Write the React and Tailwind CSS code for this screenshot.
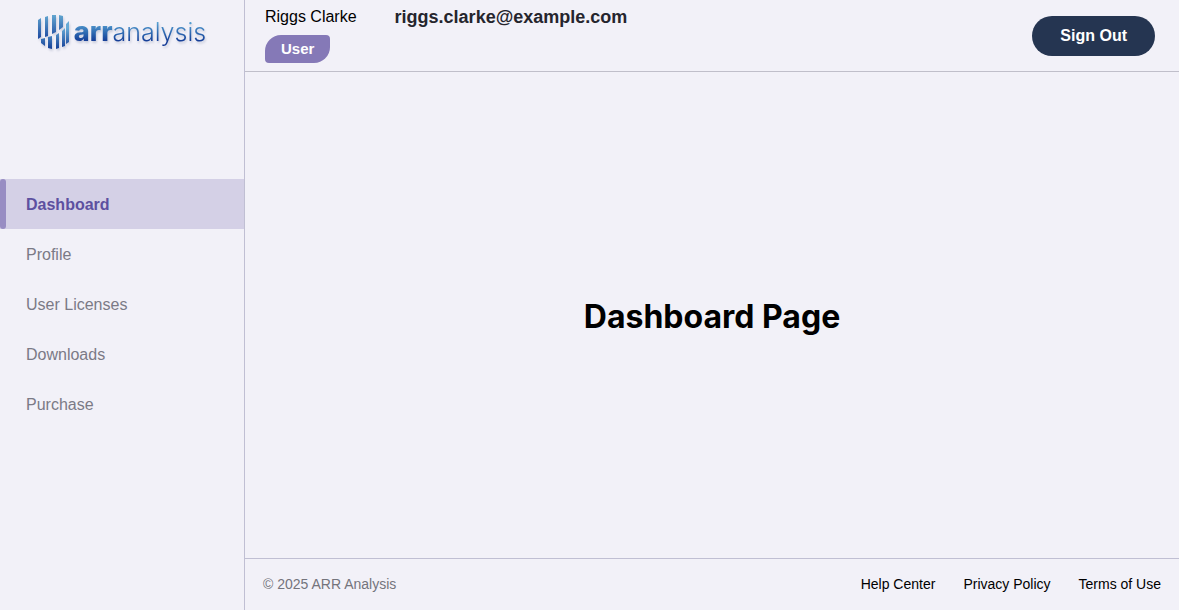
const navItems = ["Profile", "User Licenses", "Downloads", "Purchase"];
const footerLinks = ["Help Center", "Privacy Policy", "Terms of Use"];

function Logo() {
  return (
    <a href="#" aria-label="arranalysis" className="flex items-start gap-1 drop-shadow-[1px_2px_1px_rgba(40,60,110,0.2)]">
      <svg className="h-9 w-8" viewBox="0 0 32 36" aria-hidden="true">
        <defs>
          <linearGradient id="upper" gradientUnits="userSpaceOnUse" x1="0" y1="1" x2="0" y2="25">
            <stop offset="0" stopColor="#62a6d0" />
            <stop offset="1" stopColor="#1c479f" />
          </linearGradient>
          <linearGradient id="lower" gradientUnits="userSpaceOnUse" x1="0" y1="14" x2="0" y2="35">
            <stop offset="0" stopColor="#66aad6" />
            <stop offset="1" stopColor="#123d96" />
          </linearGradient>
        </defs>
        <path fill="url(#upper)" d="M0 6l3-2v19l-3 2zM7 3l3-1v20l-3 1zM14 1h4v17l-4 2zM21 1l4 1v11l-4 3z" />
        <path fill="url(#lower)" d="M3 25l4-1v8l-4-3zM10 23l4-1v13l-4-1zM18 21l3-2v15l-3 1zM24 17l3-3v18l-3 1zM28 10l3-3v21l-3 2z" />
      </svg>
      <span className="bg-linear-to-b from-[#5ba5d4] from-20% to-[#143b96] to-70% bg-clip-text font-[Inter] leading-9 text-transparent">
        <b className="text-[27px] font-extrabold">arr</b><span className="text-[25px] font-light">analysis</span>
      </span>
    </a>
  );
}

export default function App() {
  return (
    <div className="flex min-h-screen bg-[#f2f1f8] font-['Liberation_Sans',Arial,sans-serif] text-black">
      <aside className="w-[245px] shrink-0 border-r border-[#c0bfd3]">
        <div className="flex h-[179px] justify-center pt-3.5">
          <div><Logo /></div>
        </div>
        <nav className="flex flex-col">
          <a href="#" aria-current="page" className="flex bg-[#d4d0e6] font-bold text-[#5d50a0]">
            <span className="w-1.5 rounded-sm bg-[#988dc3]" />
            <span className="pt-0.5 pl-5 leading-12">Dashboard</span>
          </a>
          {navItems.map((item) => (
            <a key={item} href="#" className="pt-0.5 pl-[26px] leading-12 text-[#7b7a86]">{item}</a>
          ))}
        </nav>
      </aside>
      <div className="flex min-w-0 flex-1 flex-col">
        <header className="flex h-[72px] items-center justify-between border-b border-[#c0bfca] pr-6 pl-5">
          <div className="flex gap-[38px] self-start pt-[5px]">
            <div className="flex flex-col items-start gap-1.5">
              <span className="leading-6">Riggs Clarke</span>
              <span className="rounded-tl-2xl rounded-tr rounded-br-2xl rounded-bl bg-[#8579b7] px-4 text-[15px] leading-7 font-bold text-white">User</span>
            </div>
            <span className="text-lg leading-6 font-bold text-[#25252d]">riggs.clarke@example.com</span>
          </div>
          <button type="button" className="h-10 rounded-full bg-[#253551] px-7 font-bold text-white">Sign Out</button>
        </header>
        <main className="flex flex-1 items-center justify-center pt-1">
          <h1 className="font-[Inter] text-[32px] leading-10 font-bold">Dashboard Page</h1>
        </main>
        <footer className="flex h-[52px] items-center justify-between border-t border-[#c0bfd3] px-[18px] pb-0.5 text-sm">
          <span className="text-[#74747c]">© 2025 ARR Analysis</span>
          <nav className="flex gap-7">
            {footerLinks.map((item) => <a key={item} href="#">{item}</a>)}
          </nav>
        </footer>
      </div>
    </div>
  );
}
